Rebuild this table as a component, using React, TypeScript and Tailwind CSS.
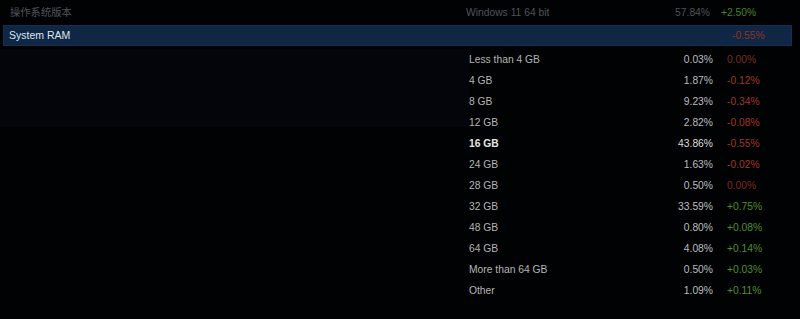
const rows = [
  { label: "Less than 4 GB", pct: "0.03%", change: "0.00%", tone: "zero" },
  { label: "4 GB", pct: "1.87%", change: "-0.12%", tone: "down" },
  { label: "8 GB", pct: "9.23%", change: "-0.34%", tone: "down" },
  { label: "12 GB", pct: "2.82%", change: "-0.08%", tone: "down" },
  { label: "16 GB", pct: "43.86%", change: "-0.55%", tone: "down", bold: true },
  { label: "24 GB", pct: "1.63%", change: "-0.02%", tone: "down" },
  { label: "28 GB", pct: "0.50%", change: "0.00%", tone: "zero" },
  { label: "32 GB", pct: "33.59%", change: "+0.75%", tone: "up" },
  { label: "48 GB", pct: "0.80%", change: "+0.08%", tone: "up" },
  { label: "64 GB", pct: "4.08%", change: "+0.14%", tone: "up" },
  { label: "More than 64 GB", pct: "0.50%", change: "+0.03%", tone: "up" },
  { label: "Other", pct: "1.09%", change: "+0.11%", tone: "up" },
];

const toneClass: Record<string, string> = {
  up: "text-[#4f8f2c]",
  down: "text-[#a3352a]",
  zero: "text-[#7f2a22]",
};

export default function App() {
  return (
    <div className="w-[800px] h-[319px] overflow-hidden bg-[#010203] text-[10.3px] font-['Liberation_Sans','Noto_Sans_CJK_SC',Arial,sans-serif]">
      {/* top category row */}
      <div className="flex items-center h-[25px] text-[#4f5459]">
        <div className="w-[466px] pl-[10px]">操作系统版本</div>
        <div className="w-[170px]">Windows 11 64 bit</div>
        <div className="w-[74px] text-right">57.84%</div>
        <div className="pl-[11px] text-[#4a8426]">+2.50%</div>
      </div>

      {/* selected category header */}
      <div className="flex items-center h-[21px] ml-[3px] mr-[8px] bg-[#0f2745] border border-[#15304f]">
        <div className="flex-1 pl-[5px] text-[#dfe6ee] text-[10.5px]">System RAM</div>
        <div className="w-[59px] text-[#8c3426]">-0.55%</div>
      </div>

      <div className="flex pt-[3px]">
        <div className="w-[469px] h-[78px] bg-[#03050a]" />
        <div className="flex flex-col">
          {rows.map((r) => (
            <div key={r.label} className="flex items-center h-[21px]">
              <div className={r.bold ? "w-[170px] font-bold text-[#e6e6e6]" : "w-[170px] text-[#b4b4b4]"}>
                {r.label}
              </div>
              <div className={r.bold ? "w-[74px] text-right text-[#dcdcdc]" : "w-[74px] text-right text-[#bdbdbd]"}>
                {r.pct}
              </div>
              <div className={"pl-[14px] " + toneClass[r.tone]}>{r.change}</div>
            </div>
          ))}
        </div>
      </div>
    </div>
  );
}
